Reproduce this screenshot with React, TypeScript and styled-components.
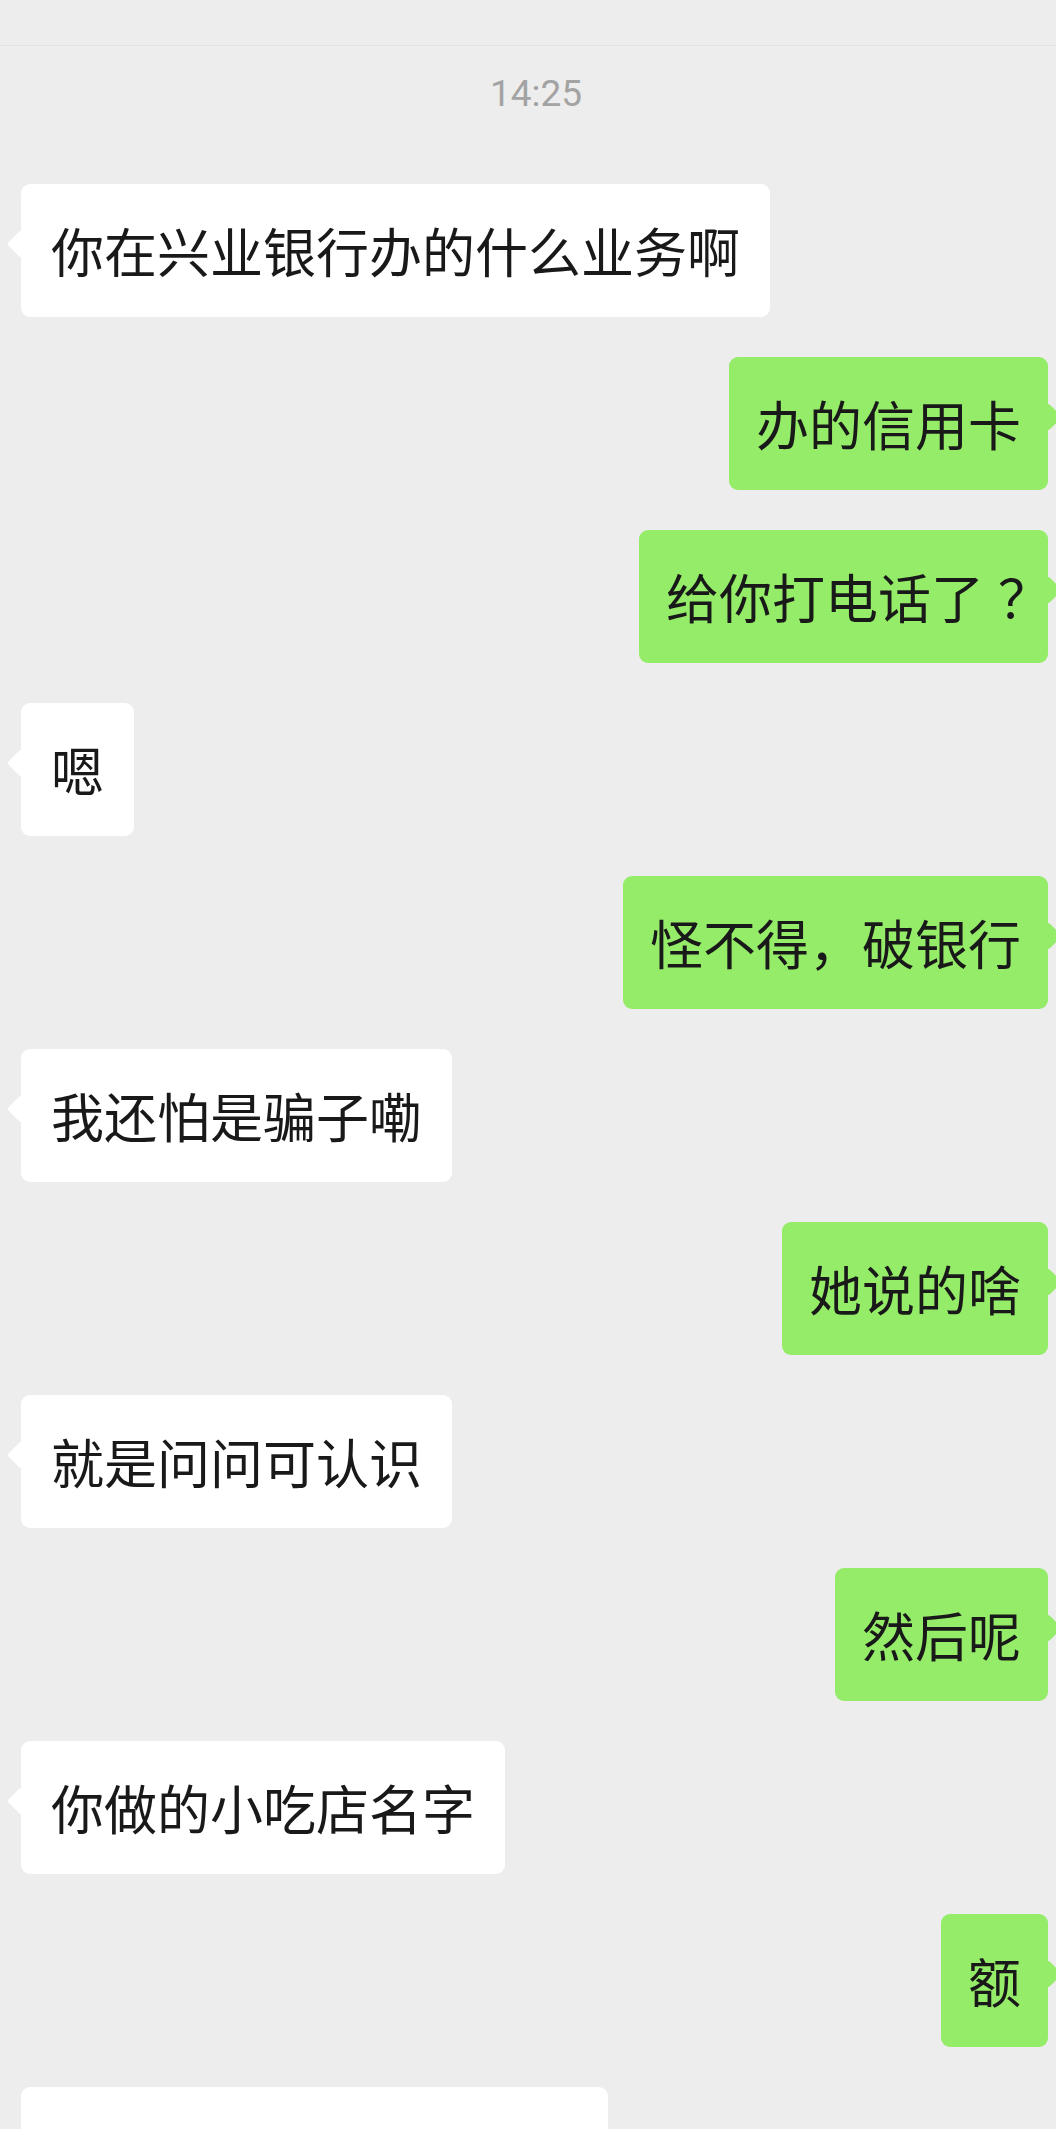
import React from 'react';
import styled, { createGlobalStyle } from 'styled-components';

const GlobalStyle = createGlobalStyle`
  html, body {
    margin: 0;
    padding: 0;
    background-color: #ededed;
  }
  body {
    font-family: "Noto Sans CJK SC", "Noto Sans", sans-serif;
    overflow: hidden;
  }
`;

const Screen = styled.div`
  width: 1056px;
  height: 2129px;
  overflow: hidden;
  background-color: #ededed;
  display: flex;
  flex-direction: column;
`;

const TopBar = styled.div`
  height: 45px;
  border-bottom: 1px solid #e2e2e2;
  flex-shrink: 0;
`;

const TimeStamp = styled.div`
  margin-top: 27px;
  padding-left: 16px;
  text-align: center;
  font-family: Roboto, "Noto Sans", sans-serif;
  font-size: 37px;
  line-height: 42px;
  color: #a3a3a3;
`;

const MessageList = styled.div`
  display: flex;
  flex-direction: column;
  gap: 40px;
  margin-top: 69px;
`;

const Row = styled.div<{ mine?: boolean }>`
  display: flex;
  justify-content: ${p => (p.mine ? 'flex-end' : 'flex-start')};
  padding: ${p => (p.mine ? '0 8px 0 0' : '0 0 0 21px')};
`;

const Bubble = styled.div<{ mine?: boolean }>`
  position: relative;
  box-sizing: border-box;
  min-height: 133px;
  padding: ${p => (p.mine ? '30px 27px' : '30px 30px')};
  border-radius: 9px;
  background-color: ${p => (p.mine ? '#95ec69' : '#ffffff')};
  color: #191919;
  font-size: 53px;
  line-height: 73px;
  white-space: nowrap;

  &::before {
    content: '';
    position: absolute;
    top: 50px;
    ${p => (p.mine ? 'right: -10px;' : 'left: -10px;')}
    width: 20px;
    height: 20px;
    border-radius: 3px;
    background-color: inherit;
    transform: rotate(45deg);
  }
`;

// the phone font sets the full-width question mark narrower than one em
const NarrowMark = styled.span`
  margin-left: 14px;
  letter-spacing: -30px;
`;

type Message = { mine?: boolean; text: React.ReactNode; width?: number };

const messages: Message[] = [
  { text: '你在兴业银行办的什么业务啊' },
  { mine: true, text: '办的信用卡' },
  { mine: true, text: <>给你打电话了<NarrowMark>？</NarrowMark></> },
  { text: '嗯' },
  { mine: true, text: '怪不得，破银行' },
  { text: '我还怕是骗子嘞' },
  { mine: true, text: '她说的啥' },
  { text: '就是问问可认识' },
  { mine: true, text: '然后呢' },
  { text: '你做的小吃店名字' },
  { mine: true, text: '额' },
  { text: '', width: 587 },
];

export default function App() {
  return (
    <>
      <GlobalStyle />
      <Screen>
        <TopBar />
        <TimeStamp>14:25</TimeStamp>
        <MessageList>
          {messages.map((m, i) => (
            <Row key={i} mine={m.mine}>
              <Bubble mine={m.mine} style={m.width ? { width: m.width } : undefined}>
                {m.text}
              </Bubble>
            </Row>
          ))}
        </MessageList>
      </Screen>
    </>
  );
}
